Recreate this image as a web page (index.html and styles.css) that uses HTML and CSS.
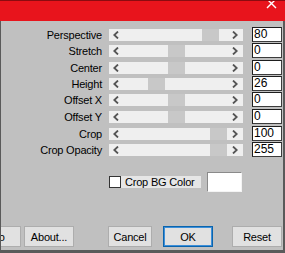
FILE: index.html
```html
<!DOCTYPE html>
<html>
<head>
<meta charset="utf-8">
<link rel="stylesheet" href="styles.css">
</head>
<body>
<div class="window">
  <div class="titlebar">
    <svg class="close" width="11" height="11" viewBox="0 0 11 11"><path d="M1 1 L10 10 M10 1 L1 10" stroke="#fff" stroke-width="1.4" fill="none"/></svg>
  </div>
  <div class="content">
    <div class="rows">
      <div class="row h16"><div class="label">Perspective</div><div class="track"><svg class="chev" width="6" height="8" viewBox="0 0 6 8"><path d="M5 0.5 L1.3 4 L5 7.5" stroke="#555" stroke-width="1.8" fill="none"/></svg><div class="thumb" style="left:93px"></div><svg class="chev" width="6" height="8" viewBox="0 0 6 8"><path d="M1 0.5 L4.7 4 L1 7.5" stroke="#555" stroke-width="1.8" fill="none"/></svg></div><div class="num">80</div></div>
      <div class="row h17"><div class="label">Stretch</div><div class="track"><svg class="chev" width="6" height="8" viewBox="0 0 6 8"><path d="M5 0.5 L1.3 4 L5 7.5" stroke="#555" stroke-width="1.8" fill="none"/></svg><div class="thumb" style="left:59px"></div><svg class="chev" width="6" height="8" viewBox="0 0 6 8"><path d="M1 0.5 L4.7 4 L1 7.5" stroke="#555" stroke-width="1.8" fill="none"/></svg></div><div class="num">0</div></div>
      <div class="row h16"><div class="label">Center</div><div class="track"><svg class="chev" width="6" height="8" viewBox="0 0 6 8"><path d="M5 0.5 L1.3 4 L5 7.5" stroke="#555" stroke-width="1.8" fill="none"/></svg><div class="thumb" style="left:59px"></div><svg class="chev" width="6" height="8" viewBox="0 0 6 8"><path d="M1 0.5 L4.7 4 L1 7.5" stroke="#555" stroke-width="1.8" fill="none"/></svg></div><div class="num">0</div></div>
      <div class="row h16"><div class="label">Height</div><div class="track"><svg class="chev" width="6" height="8" viewBox="0 0 6 8"><path d="M5 0.5 L1.3 4 L5 7.5" stroke="#555" stroke-width="1.8" fill="none"/></svg><div class="thumb" style="left:39px"></div><svg class="chev" width="6" height="8" viewBox="0 0 6 8"><path d="M1 0.5 L4.7 4 L1 7.5" stroke="#555" stroke-width="1.8" fill="none"/></svg></div><div class="num">26</div></div>
      <div class="row h17"><div class="label">Offset X</div><div class="track"><svg class="chev" width="6" height="8" viewBox="0 0 6 8"><path d="M5 0.5 L1.3 4 L5 7.5" stroke="#555" stroke-width="1.8" fill="none"/></svg><div class="thumb" style="left:59px"></div><svg class="chev" width="6" height="8" viewBox="0 0 6 8"><path d="M1 0.5 L4.7 4 L1 7.5" stroke="#555" stroke-width="1.8" fill="none"/></svg></div><div class="num">0</div></div>
      <div class="row h17"><div class="label">Offset Y</div><div class="track"><svg class="chev" width="6" height="8" viewBox="0 0 6 8"><path d="M5 0.5 L1.3 4 L5 7.5" stroke="#555" stroke-width="1.8" fill="none"/></svg><div class="thumb" style="left:59px"></div><svg class="chev" width="6" height="8" viewBox="0 0 6 8"><path d="M1 0.5 L4.7 4 L1 7.5" stroke="#555" stroke-width="1.8" fill="none"/></svg></div><div class="num">0</div></div>
      <div class="row h16"><div class="label">Crop</div><div class="track"><svg class="chev" width="6" height="8" viewBox="0 0 6 8"><path d="M5 0.5 L1.3 4 L5 7.5" stroke="#555" stroke-width="1.8" fill="none"/></svg><div class="thumb" style="left:101px"></div><svg class="chev" width="6" height="8" viewBox="0 0 6 8"><path d="M1 0.5 L4.7 4 L1 7.5" stroke="#555" stroke-width="1.8" fill="none"/></svg></div><div class="num">100</div></div>
      <div class="row h16"><div class="label">Crop Opacity</div><div class="track"><svg class="chev" width="6" height="8" viewBox="0 0 6 8"><path d="M5 0.5 L1.3 4 L5 7.5" stroke="#555" stroke-width="1.8" fill="none"/></svg><div class="thumb" style="left:101px"></div><svg class="chev" width="6" height="8" viewBox="0 0 6 8"><path d="M1 0.5 L4.7 4 L1 7.5" stroke="#555" stroke-width="1.8" fill="none"/></svg></div><div class="num">255</div></div>
    </div>
    <div class="checkrow">
      <div class="checkbox"></div>
      <div class="checklabel">Crop BG Color</div>
      <div class="swatch"></div>
    </div>
    <div class="buttons">
      <div class="btn btn-info">Info</div>
      <div class="btn btn-about">About...</div>
      <div class="btn btn-cancel">Cancel</div>
      <div class="btn btn-ok">OK</div>
      <div class="btn btn-reset">Reset</div>
    </div>
  </div>
</div>
</body>
</html>
```

FILE: styles.css
```css
html, body {
  margin: 0;
  padding: 0;
  overflow: hidden;
}
body {
  width: 285px;
  height: 253px;
  background: #c0c0c0;
  font-family: "Liberation Sans", Arial, sans-serif;
  font-size: 11px;
  letter-spacing: -0.2px;
  color: #000;
}
.window {
  width: 285px;
  height: 253px;
  box-sizing: border-box;
  display: flex;
  flex-direction: column;
  border-bottom: 3px solid #5a5a5a;
}
.titlebar {
  height: 20px;
  flex: none;
  background: #e8141c;
  border-top: 1px solid #8c0b10;
  display: flex;
  justify-content: flex-end;
  align-items: flex-start;
  padding-right: 8px;
  overflow: hidden;
}
.close {
  margin-top: -3px;
  display: block;
}
.content {
  flex: 1;
  border-left: 1px solid #5a5a5a;
  border-right: 2px solid #5a5a5a;
  display: flex;
  flex-direction: column;
  padding-top: 6px;
  overflow: hidden;
}
.rows {
  display: flex;
  flex-direction: column;
}
.row {
  display: flex;
  align-items: flex-start;
}
.h16 { height: 16px; }
.h17 { height: 17px; }
.label {
  width: 101px;
  text-align: right;
  margin-top: 2px;
  line-height: 12px;
  height: 12px;
  white-space: nowrap;
}
.track {
  position: relative;
  margin-left: 7px;
  margin-top: 2px;
  width: 134px;
  height: 12px;
  background: #efefef;
  display: flex;
  align-items: center;
  justify-content: space-between;
  padding: 0 5px 0 4px;
  box-sizing: border-box;
}
.chev {
  display: block;
  position: relative;
  z-index: 1;
}
.thumb {
  position: absolute;
  top: 0;
  width: 17px;
  height: 12px;
  background: #c8c8c8;
}
.num {
  margin-left: 9px;
  width: 30px;
  height: 15px;
  box-sizing: border-box;
  background: #fff;
  border: 1px solid #3c3c3c;
  border-top-color: #1e1e1e;
  border-left-color: #1e1e1e;
  padding-left: 1px;
  line-height: 13px;
  font-size: 12px;
  letter-spacing: 0;
}
.checkrow {
  display: flex;
  align-items: center;
  height: 20px;
  margin-top: 14px;
  padding-left: 108px;
}
.checkbox {
  width: 12px;
  height: 12px;
  box-sizing: border-box;
  background: #fff;
  border: 1px solid #333;
}
.checklabel {
  width: 80px;
  height: 12px;
  line-height: 12px;
  background: #e6e6e6;
  padding-left: 4px;
  box-sizing: border-box;
}
.swatch {
  margin-left: 6px;
  width: 35px;
  height: 20px;
  box-sizing: border-box;
  background: #fff;
  border: 1px solid #f4f4f4;
  border-top-color: #8a8a8a;
  border-left-color: #8a8a8a;
}
.buttons {
  display: flex;
  margin-top: 34px;
  height: 21px;
}
.btn {
  height: 21px;
  box-sizing: border-box;
  background: #e1e1e1;
  border: 1px solid #adadad;
  display: flex;
  align-items: center;
  justify-content: center;
  flex: none;
  font-size: 11px;
}
.btn-info { width: 50px; margin-left: -30px; }
.btn-about { width: 50px; margin-left: 3px; }
.btn-cancel { width: 44px; margin-left: 34px; }
.btn-ok {
  width: 50px;
  margin-left: 11px;
  border-color: #0a64ad;
  box-shadow: inset 0 0 0 1px #3d8fd9;
}
.btn-reset { width: 50px; margin-left: 19px; }
```
